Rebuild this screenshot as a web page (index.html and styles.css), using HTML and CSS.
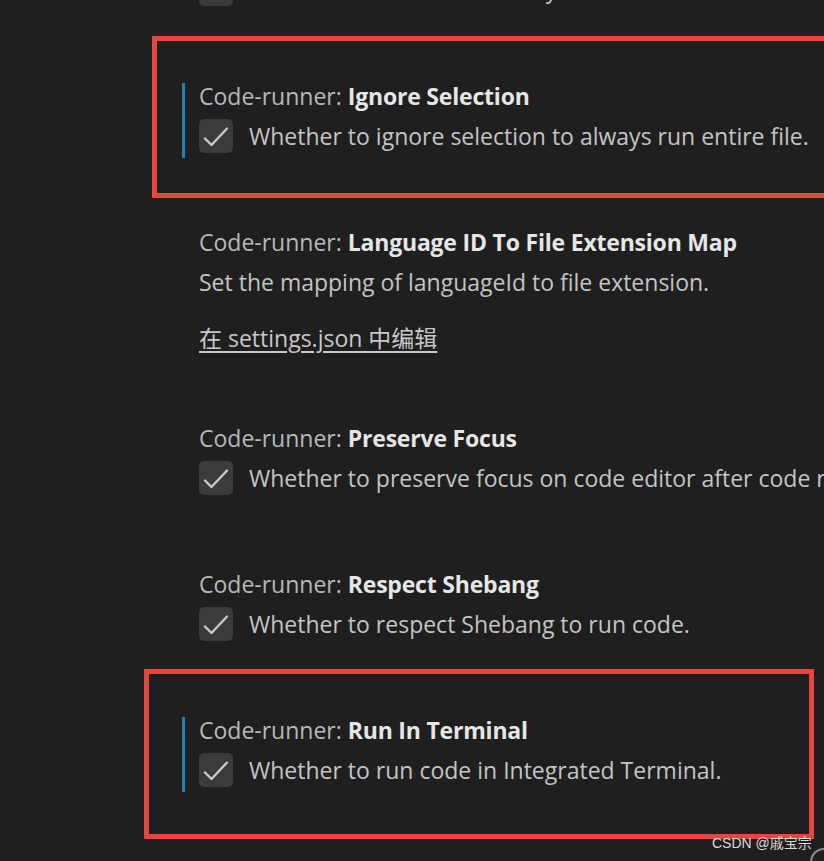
FILE: index.html
```html
<!DOCTYPE html>
<html lang="zh-CN">
<head>
<meta charset="utf-8">
<title>Code Runner Settings</title>
<link rel="stylesheet" href="styles.css">
</head>
<body>
<div class="page">
  <div class="list">
    <div class="item">
      <div class="title"><span class="cat">Code-runner: </span><span class="name">File Directory As Cwd</span></div>
      <div class="row">
        <span class="checkbox"><svg viewBox="0 0 34 34" width="34" height="34"><path d="M6 19.5 L12.5 26 L28 9.5" /></svg></span>
        <span class="desc">Whether to use the directory of the file to be executed as the working directory.</span>
      </div>
    </div>

    <div class="item focused">
      <div class="title"><span class="cat">Code-runner: </span><span class="name">Ignore Selection</span></div>
      <div class="row">
        <span class="checkbox"><svg viewBox="0 0 34 34" width="34" height="34"><path d="M6 19.5 L12.5 26 L28 9.5" /></svg></span>
        <span class="desc">Whether to ignore selection to always run entire file.</span>
      </div>
    </div>

    <div class="item">
      <div class="title"><span class="cat">Code-runner: </span><span class="name">Language ID To File Extension Map</span></div>
      <div class="row">
        <span class="desc plain">Set the mapping of languageId to file extension.</span>
      </div>
      <div class="link-row"><a class="link" href="#">在 settings.json 中编辑</a></div>
    </div>

    <div class="item">
      <div class="title"><span class="cat">Code-runner: </span><span class="name">Preserve Focus</span></div>
      <div class="row">
        <span class="checkbox"><svg viewBox="0 0 34 34" width="34" height="34"><path d="M6 19.5 L12.5 26 L28 9.5" /></svg></span>
        <span class="desc">Whether to preserve focus on code editor after code run is triggered.</span>
      </div>
    </div>

    <div class="item">
      <div class="title"><span class="cat">Code-runner: </span><span class="name">Respect Shebang</span></div>
      <div class="row">
        <span class="checkbox"><svg viewBox="0 0 34 34" width="34" height="34"><path d="M6 19.5 L12.5 26 L28 9.5" /></svg></span>
        <span class="desc">Whether to respect Shebang to run code.</span>
      </div>
    </div>

    <div class="item focused">
      <div class="title"><span class="cat">Code-runner: </span><span class="name">Run In Terminal</span></div>
      <div class="row">
        <span class="checkbox"><svg viewBox="0 0 34 34" width="34" height="34"><path d="M6 19.5 L12.5 26 L28 9.5" /></svg></span>
        <span class="desc">Whether to run code in Integrated Terminal.</span>
      </div>
    </div>
  </div>

  <div class="mark mark-1"></div>
  <div class="mark mark-2"></div>
  <div class="watermark">CSDN @戚宝宗</div>
  <div class="corner"></div>
</div>
</body>
</html>
```

FILE: styles.css
```css
html, body {
  margin: 0;
  padding: 0;
}
body {
  background: #1f1f1f;
  width: 824px;
  height: 861px;
  overflow: hidden;
  font-family: "Open Sans", "Noto Sans", "Noto Sans CJK SC", sans-serif;
  font-size: 23px;
  color: #c4c4c4;
}
.page {
  position: relative;
  width: 824px;
  height: 861px;
  overflow: hidden;
}
.list {
  margin-top: -64px;
  padding-left: 182px;
  display: flex;
  flex-direction: column;
  gap: 71px;
}
.item {
  border-left: 3px solid transparent;
  padding-left: 14px;
  padding-bottom: 5px;
}
.item:first-child {
  padding-bottom: 6px;
}
.item.focused {
  border-left-color: #2a7fb2;
}
.title {
  height: 26px;
  line-height: 26px;
  white-space: nowrap;
}
.cat {
  color: #b8b8b8;
}
.name {
  color: #e6e6e6;
  font-weight: 700;
  letter-spacing: -0.2px;
}
.row {
  margin-top: 10px;
  height: 34px;
  display: flex;
  align-items: center;
  gap: 16px;
  white-space: nowrap;
}
.checkbox {
  flex: none;
  width: 34px;
  height: 34px;
  border-radius: 5px;
  background: #3b3b3b;
  display: flex;
}
.checkbox svg path {
  fill: none;
  stroke: #c9c9c9;
  stroke-width: 2.4;
  stroke-linecap: round;
  stroke-linejoin: round;
}
.desc {
  color: #c4c4c4;
}
.link-row {
  margin-top: 26px;
  height: 26px;
  line-height: 26px;
  margin-bottom: -2px;
}
.link {
  color: #c8c8c8;
  text-decoration: underline;
  text-underline-offset: 4px;
  font-family: "Open Sans", "Noto Sans CJK SC", sans-serif;
}
.mark {
  position: absolute;
  border: 5px solid #e6473d;
  box-sizing: border-box;
}
.mark-1 {
  left: 152px;
  top: 36px;
  width: 700px;
  height: 162px;
}
.mark-2 {
  left: 144px;
  top: 669px;
  width: 670px;
  height: 170px;
}
.watermark {
  position: absolute;
  left: 712px;
  top: 833px;
  font-family: "Liberation Sans", "Noto Sans CJK SC", sans-serif;
  font-size: 14px;
  line-height: 20px;
  color: #dcdcdc;
}
.corner {
  position: absolute;
  left: 810px;
  top: 848px;
  width: 24px;
  height: 24px;
  border: 2px solid #8a8a8a;
  border-radius: 50%;
}
```
